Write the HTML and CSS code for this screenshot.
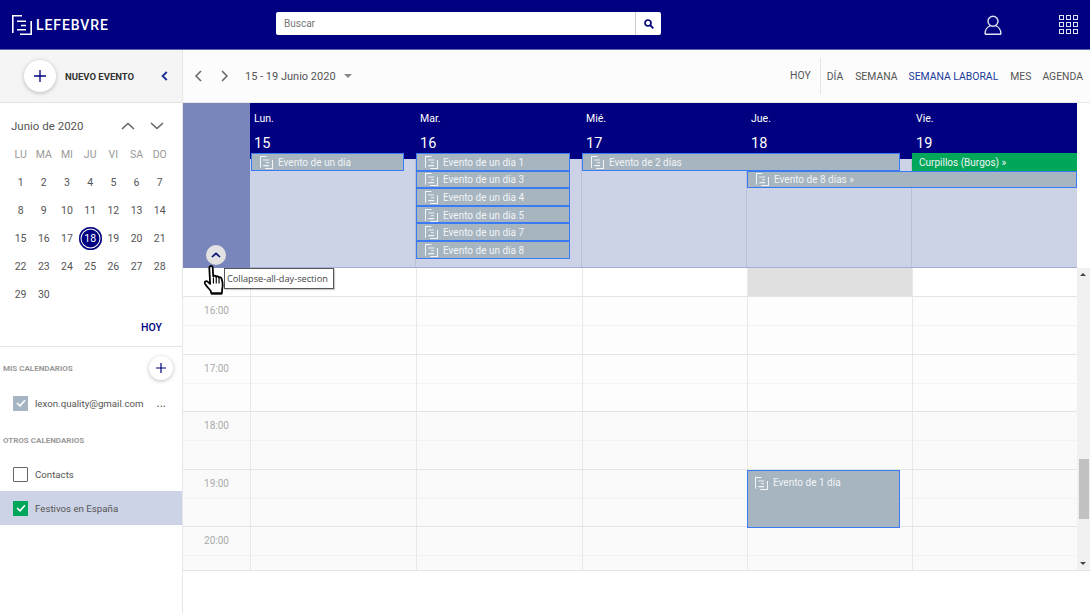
FILE: index.html
```html
<!DOCTYPE html>
<html>
  <head>
    <title>Calendario</title>
    <link rel="stylesheet" href="styles.css">
  </head>
  <body>
    <svg class="defs" width="0" height="0">
      <symbol id="doc" viewBox="0 0 20 20">
        <path d="M10 .8H.8V18M19.2 6V19.2H8M5 6.2H14M9 10.5H14M5 14.8H14" fill="none" stroke="currentColor" stroke-width="1.6"/>
      </symbol>
    </svg>

    <header class="topbar">
      <div class="logo">
        <svg class="logo-icon"><use href="#doc"/></svg>
        <span>LEFEBVRE</span>
      </div>
      <div class="search">
        <span class="search-text">Buscar</span>
        <span class="search-btn">
          <svg width="10" height="10" viewBox="0 0 10 10"><circle cx="4" cy="4" r="3" fill="none" stroke="#000080" stroke-width="1.7"/><path d="M6.2 6.2L9.3 9.3" stroke="#000080" stroke-width="1.9"/></svg>
        </span>
      </div>
      <svg class="user-icon" width="18" height="20" viewBox="0 0 18 20"><circle cx="9" cy="6.2" r="5" fill="none" stroke="#dfe3f2" stroke-width="1.4"/><path d="M1 19.2C1 14.5 4 11.5 6.5 10.7M17 19.2C17 14.5 14 11.5 11.5 10.7M1 19.2H17" fill="none" stroke="#dfe3f2" stroke-width="1.4"/></svg>
      <div class="apps">
        <i></i><i></i><i></i><i></i><i></i><i></i><i></i><i></i><i></i>
      </div>
    </header>

    <div class="layout">
      <aside class="sidebar">
        <div class="new-event">
          <span class="round-btn big">
            <svg width="12" height="12" viewBox="0 0 12 12"><path d="M6 0V12M0 6H12" stroke="#000080" stroke-width="1.3"/></svg>
          </span>
          <span class="new-label">NUEVO EVENTO</span>
          <svg class="collapse" width="7" height="10" viewBox="0 0 7 10"><path d="M5.8 1L1.6 5L5.8 9" fill="none" stroke="#1a2f96" stroke-width="1.8"/></svg>
        </div>

        <div class="mini-cal">
          <div class="mini-head">
            <span>Junio de 2020</span>
            <svg width="14" height="8" viewBox="0 0 14 8"><path d="M1 7L7 1.5L13 7" fill="none" stroke="#666" stroke-width="1.6"/></svg>
            <svg width="14" height="8" viewBox="0 0 14 8"><path d="M1 1L7 6.5L13 1" fill="none" stroke="#666" stroke-width="1.6"/></svg>
          </div>
          <div class="mini-grid">
            <b>LU</b><b>MA</b><b>MI</b><b>JU</b><b>VI</b><b>SA</b><b>DO</b>
            <span>1</span><span>2</span><span>3</span><span>4</span><span>5</span><span>6</span><span>7</span>
            <span>8</span><span>9</span><span>10</span><span>11</span><span>12</span><span>13</span><span>14</span>
            <span>15</span><span>16</span><span>17</span><span class="today">18</span><span>19</span><span>20</span><span>21</span>
            <span>22</span><span>23</span><span>24</span><span>25</span><span>26</span><span>27</span><span>28</span>
            <span>29</span><span>30</span>
          </div>
          <div class="hoy">HOY</div>
        </div>

        <div class="cal-list">
          <div class="list-title first">
            <span>MIS CALENDARIOS</span>
            <span class="round-btn small">
              <svg width="10" height="10" viewBox="0 0 10 10"><path d="M5 0V10M0 5H10" stroke="#000080" stroke-width="1.2"/></svg>
            </span>
          </div>
          <div class="cal-row mine">
            <span class="check grey"><svg width="10" height="8" viewBox="0 0 10 8"><path d="M1 4L4 6.8L9 1.2" fill="none" stroke="#fff" stroke-width="1.6"/></svg></span>
            <span class="cal-name">lexon.quality@gmail.com</span>
            <span class="dots">...</span>
          </div>
          <div class="list-title">
            <span>OTROS CALENDARIOS</span>
          </div>
          <div class="cal-row contacts">
            <span class="check empty"></span>
            <span class="cal-name">Contacts</span>
          </div>
          <div class="cal-row active">
            <span class="check green"><svg width="10" height="8" viewBox="0 0 10 8"><path d="M1 4L4 6.8L9 1.2" fill="none" stroke="#fff" stroke-width="1.6"/></svg></span>
            <span class="cal-name">Festivos en España</span>
          </div>
        </div>
      </aside>

      <main class="main">
        <div class="toolbar">
          <svg width="8" height="12" viewBox="0 0 8 12"><path d="M7 1L2 6L7 11" fill="none" stroke="#666" stroke-width="1.5"/></svg>
          <svg class="next" width="8" height="12" viewBox="0 0 8 12"><path d="M1 1L6 6L1 11" fill="none" stroke="#666" stroke-width="1.5"/></svg>
          <span class="range">15 - 19 Junio 2020</span>
          <span class="caret"></span>
          <nav class="views">
            <a class="today-link">HOY</a>
            <a>DÍA</a>
            <a>SEMANA</a>
            <a class="current">SEMANA LABORAL</a>
            <a>MES</a>
            <a class="tight">AGENDA</a>
          </nav>
        </div>

        <div class="week-head">
          <div class="gutter-head">
            <span class="up-btn">
              <svg width="10" height="6" viewBox="0 0 10 6"><path d="M1 5L5 1.4L9 5" fill="none" stroke="#000080" stroke-width="1.6"/></svg>
            </span>
          </div>
          <div class="week-main">
            <div class="days">
              <div class="day"><span>Lun.</span><strong>15</strong></div>
              <div class="day"><span>Mar.</span><strong>16</strong></div>
              <div class="day"><span>Mié.</span><strong>17</strong></div>
              <div class="day"><span>Jue.</span><strong>18</strong></div>
              <div class="day"><span>Vie.</span><strong>19</strong></div>
            </div>
            <div class="allday">
              <div class="allday-col"></div><div class="allday-col"></div><div class="allday-col"></div><div class="allday-col"></div><div class="allday-col"></div>
              <div class="allday-events">
                <div class="ev mon r1"><svg><use href="#doc"/></svg>Evento de un día</div>
                <div class="ev tue r1"><svg><use href="#doc"/></svg>Evento de un día 1</div>
                <div class="ev tue r2"><svg><use href="#doc"/></svg>Evento de un día 3</div>
                <div class="ev tue r3"><svg><use href="#doc"/></svg>Evento de un día 4</div>
                <div class="ev tue r4"><svg><use href="#doc"/></svg>Evento de un día 5</div>
                <div class="ev tue r5"><svg><use href="#doc"/></svg>Evento de un día 7</div>
                <div class="ev tue r6"><svg><use href="#doc"/></svg>Evento de un día 8</div>
                <div class="ev wed-thu r1"><svg><use href="#doc"/></svg>Evento de 2 días</div>
                <div class="ev open thu-fri r2"><svg><use href="#doc"/></svg>Evento de 8 días »</div>
                <div class="ev open holiday fri r1">Curpillos (Burgos) »</div>
              </div>
            </div>
          </div>
        </div>

        <div class="time-area">
          <div class="hours">
            <div class="slot first"><div class="label"></div><div></div><div></div><div></div><div class="busy"></div><div></div></div>
            <div class="slot"><div class="label">16:00</div><div></div><div></div><div></div><div></div><div></div></div>
            <div class="slot"><div class="label">17:00</div><div></div><div></div><div></div><div></div><div></div></div>
            <div class="slot grey-row"><div class="label">18:00</div><div></div><div></div><div></div><div></div><div></div></div>
            <div class="slot grey-row"><div class="label">19:00</div><div></div><div></div><div></div><div></div><div></div></div>
            <div class="slot grey-row last"><div class="label">20:00</div><div></div><div></div><div></div><div></div><div></div></div>
            <div class="ev timed"><svg><use href="#doc"/></svg>Evento de 1 día</div>
          </div>
          <div class="scrollbar">
            <span class="arrow up"></span>
            <span class="thumb"></span>
            <span class="arrow down"></span>
          </div>
        </div>

        <div class="tooltip">Collapse-all-day-section</div>
        <svg class="hand" width="24" height="30" viewBox="0 0 22 29">
          <path d="M6 1.5C7 .5 8.6 1 8.8 2.5L9.3 11C10 10 11.5 10.2 12 11.3C12.8 10.5 14.2 10.8 14.7 12C15.6 11.5 17 12 17.3 13.2C18.5 16.5 18.7 20 18 23L17.6 27.5H7.5L6.8 25C5 22.5 2.5 20.5 1.3 18C.6 16.3 2.3 15 3.8 16L6.3 18.2L5.5 3C5.5 2.5 5.6 2 6 1.5Z" fill="#fff" stroke="#000" stroke-width="1.7" stroke-linejoin="round"/>
          <path d="M9.5 12V18M12.2 11.5V18M14.9 12.5V18" stroke="#000" stroke-width="1.1" fill="none"/>
          <path d="M7.3 27.6H17.8" stroke="#000" stroke-width="2"/>
        </svg>
      </main>
    </div>
  </body>
</html>
```
FILE: styles.css
```css
* {
  box-sizing: border-box;
}

html, body {
  height: 613px;
  margin: 0;
  overflow: hidden;
}

body {
  font-family: Roboto, "Liberation Sans", sans-serif;
  color: #444;
  background: #fff;
}

.defs {
  position: absolute;
}

/* top bar */
.topbar {
  height: 50px;
  background: #000080;
  border-bottom: 1px solid #5a66b0;
  display: flex;
  align-items: center;
  color: #fff;
}

.logo {
  display: flex;
  align-items: center;
  gap: 4px;
  width: 276px;
  padding-left: 12px;
  font-size: 14px;
  font-weight: 500;
  letter-spacing: 0.9px;
}

.logo-icon {
  width: 20px;
  height: 20px;
}

.search {
  width: 385px;
  height: 23px;
  margin-bottom: 2px;
  background: #fff;
  border-radius: 2px;
  display: flex;
  align-items: center;
  justify-content: space-between;
  padding-left: 8px;
}

.search-text {
  font-size: 10px;
  color: #777;
}

.search-btn {
  width: 26px;
  height: 23px;
  border-left: 1px solid #ccc;
  display: flex;
  align-items: center;
  justify-content: center;
}

.user-icon {
  margin-left: 323px;
}

.apps {
  margin-left: 57px;
  width: 19px;
  display: grid;
  grid-template-columns: repeat(3, 5px);
  gap: 2px;
}

.apps i {
  height: 5px;
  border: 1px solid #dfe3f2;
}

.layout {
  display: flex;
  height: 563px;
}

/* sidebar */
.sidebar {
  width: 183px;
  flex: none;
  border-right: 1px solid #e6e6e6;
}

.new-event {
  height: 53px;
  background: #f5f5f5;
  border-bottom: 1px solid #e4e4e4;
  display: flex;
  align-items: center;
  padding-left: 24px;
}

.round-btn {
  display: flex;
  align-items: center;
  justify-content: center;
  background: #fff;
  border-radius: 50%;
  box-shadow: 0 1px 4px rgba(0, 0, 0, 0.25);
}

.round-btn.big {
  width: 32px;
  height: 32px;
}

.round-btn.small {
  width: 24px;
  height: 24px;
}

.new-label {
  margin-left: 9px;
  font-size: 9.5px;
  font-weight: 700;
  color: #333;
}

.collapse {
  margin-left: 27px;
}

.mini-cal {
  height: 244px;
  border-bottom: 1px solid #e4e4e4;
  padding-top: 15px;
}

.mini-head {
  display: flex;
  align-items: center;
  height: 16px;
  padding-left: 11px;
  font-size: 11.5px;
  color: #555;
}

.mini-head span {
  width: 110px;
}

.mini-head svg + svg {
  margin-left: 15px;
}

.mini-grid {
  margin: 7px 0 0 9px;
  display: grid;
  grid-template-columns: repeat(7, 23.2px);
  grid-template-rows: 27px;
  grid-auto-rows: 28px;
  align-items: center;
  justify-items: center;
  font-size: 10.5px;
}

.mini-grid b {
  font-weight: 400;
  color: #999;
}

.mini-grid span {
  color: #555;
}

.mini-grid .today {
  width: 23px;
  height: 23px;
  display: flex;
  align-items: center;
  justify-content: center;
  border-radius: 50%;
  background: #000080;
  color: #fff;
  box-shadow: inset 0 0 0 1.5px #000080, inset 0 0 0 2.5px #fff;
}

.hoy {
  margin: 13px 20px 0 0;
  text-align: right;
  font-size: 10.5px;
  font-weight: 500;
  color: #000080;
}

.list-title {
  display: flex;
  align-items: center;
  justify-content: space-between;
  padding: 0 9px 0 3px;
  font-size: 8px;
  font-weight: 700;
  color: #999;
  height: 20px;
}

.list-title.first {
  margin-top: 11px;
}

.cal-row {
  display: flex;
  align-items: center;
  height: 34px;
  padding-left: 13px;
  font-size: 9.7px;
  color: #555;
}

.cal-row.mine {
  margin-top: 8px;
  margin-bottom: 10px;
}

.cal-row.contacts {
  margin-top: 7px;
}

.cal-row.active {
  background: #cdd3e6;
}

.check {
  width: 15px;
  height: 15px;
  margin-right: 7px;
  display: flex;
  align-items: center;
  justify-content: center;
}

.check.grey {
  background: #a6b5c4;
}

.check.green {
  background: #00a65a;
}

.check.empty {
  border: 1.5px solid #666;
  border-radius: 1px;
}

.dots {
  margin-left: 13px;
  font-size: 12px;
  color: #555;
}

/* main */
.main {
  flex: 1;
  min-width: 0;
  position: relative;
}

.toolbar {
  height: 53px;
  background: #fcfcfc;
  border-bottom: 1px solid #e8e8e8;
  display: flex;
  align-items: center;
  padding-left: 11px;
}

.next {
  margin-left: 19px;
}

.range {
  margin-left: 16px;
  font-size: 11px;
  color: #555;
}

.caret {
  margin-left: 8px;
  border: 4px solid transparent;
  border-top-color: #888;
  border-bottom: 0;
}

.views {
  margin-left: auto;
  display: flex;
  align-items: center;
  height: 36px;
  padding-right: 7px;
  font-size: 10.4px;
  color: #555;
}

.views a {
  margin-left: 12px;
}

.views .today-link {
  height: 100%;
  line-height: 36px;
  padding-right: 9px;
  border-right: 1px solid #e4e4e4;
  margin-right: -6px;
}

.views .current {
  margin-left: 11px;
  color: #1a3a9c;
}

.views .tight {
  margin-left: 11px;
}

.week-head {
  display: flex;
  width: 894px;
  height: 165px;
}

.gutter-head {
  width: 67px;
  flex: none;
  background: #7986bb;
  position: relative;
  display: flex;
  align-items: flex-end;
  justify-content: center;
  padding-bottom: 3px;
}

.up-btn {
  width: 20px;
  height: 20px;
  margin-right: 2px;
  border-radius: 50%;
  background: #e2e2e2;
  display: flex;
  align-items: center;
  justify-content: center;
}

.week-main {
  flex: 1;
  display: flex;
  flex-direction: column;
  background: #cdd3e6;
  border-bottom: 1px solid #a6aed2;
}

.days {
  height: 56px;
  flex: none;
  background: #000080;
  display: grid;
  grid-template-columns: 166px 166px 165px 165px 165px;
  color: #fff;
}

.day {
  padding: 9px 0 0 4px;
  display: flex;
  flex-direction: column;
  font-size: 10.5px;
}

.day strong {
  margin-top: 10px;
  font-size: 14.5px;
  font-weight: 400;
}

.allday {
  flex: 1;
  position: relative;
  display: grid;
  grid-template-columns: 166px 166px 165px 165px 165px;
}

.allday-col {
  border-right: 1px solid #b9bfd8;
}

.allday-col:nth-child(5) {
  border-right: 0;
}

.allday-events {
  position: absolute;
  top: -6px;
  left: 0;
  right: 0;
  display: grid;
  grid-template-columns: 166px 166px 165px 165px 165px;
  grid-auto-rows: 17.6px;
}

.r1 { grid-row: 1; }
.r2 { grid-row: 2; }
.r3 { grid-row: 3; }
.r4 { grid-row: 4; }
.r5 { grid-row: 5; }
.r6 { grid-row: 6; }

.mon { grid-column: 1; margin-left: 1px; }
.tue { grid-column: 2; }
.wed-thu { grid-column: 3 / 5; }
.thu-fri { grid-column: 4 / 6; }
.fri { grid-column: 5; }

.ev {
  display: flex;
  align-items: center;
  min-width: 0;
  margin-right: 12px;
  padding: 1px 0 0 8px;
  background: #a6b5c0;
  border: 1px solid #3a7af5;
  font-size: 10px;
  color: #f2f4f6;
  white-space: nowrap;
}

.ev svg {
  width: 13px;
  height: 13px;
  margin-right: 5px;
  flex: none;
}

.ev.open {
  margin-right: 0;
}

.ev.holiday {
  background: #00a65a;
  border-color: #00a65a;
  padding-left: 6px;
}

/* hours */
.time-area {
  display: flex;
  height: 303px;
  border-bottom: 1px solid #e4e4e4;
}

.hours {
  width: 894px;
  position: relative;
}

.slot {
  display: grid;
  grid-template-columns: 67px 166px 166px 165px 165px 165px;
  height: 57.6px;
  background: linear-gradient(#f3f3f3, #f3f3f3) 0 28px / 100% 1px no-repeat #fdfdfd;
  border-bottom: 1px solid #e4e4e4;
}

.slot > div {
  border-left: 1px solid #e8e8e8;
}

.slot > .label {
  border-left: 0;
  padding: 8px 0 0 0;
  text-align: center;
  font-size: 10px;
  color: #aaa;
}

.slot.first {
  height: 29px;
  background: #fff;
}

.slot.grey-row {
  background-color: #fafafa;
}

.slot.last {
  height: 43px;
  border-bottom: 0;
}

.slot .busy {
  background: #e0e0e0;
}

.ev.timed {
  position: absolute;
  left: 564px;
  top: 202px;
  width: 153px;
  height: 58px;
  margin: 0;
  padding: 6px 0 0 7px;
  align-items: flex-start;
}

.scrollbar {
  flex: 1;
  position: relative;
  background: #f1f1f1;
}

.thumb {
  position: absolute;
  left: 2px;
  right: 1px;
  top: 191px;
  height: 60px;
  background: #c1c1c1;
}

.arrow {
  position: absolute;
  left: 3px;
  border: 3.5px solid transparent;
}

.arrow.up {
  top: 5px;
  border-bottom-color: #444;
  border-top: 0;
}

.arrow.down {
  bottom: 5px;
  border-top-color: #444;
  border-bottom: 0;
}

.tooltip {
  position: absolute;
  left: 41px;
  top: 218px;
  height: 21px;
  width: 110px;
  padding-left: 2px;
  line-height: 20px;
  background: #fff;
  border: 1px solid #555;
  box-shadow: 1px 1px 1px rgba(0, 0, 0, 0.2);
  font-family: "Open Sans", sans-serif;
  font-size: 9.2px;
  color: #444;
  white-space: nowrap;
}

.hand {
  position: absolute;
  left: 20px;
  top: 215px;
}
```
